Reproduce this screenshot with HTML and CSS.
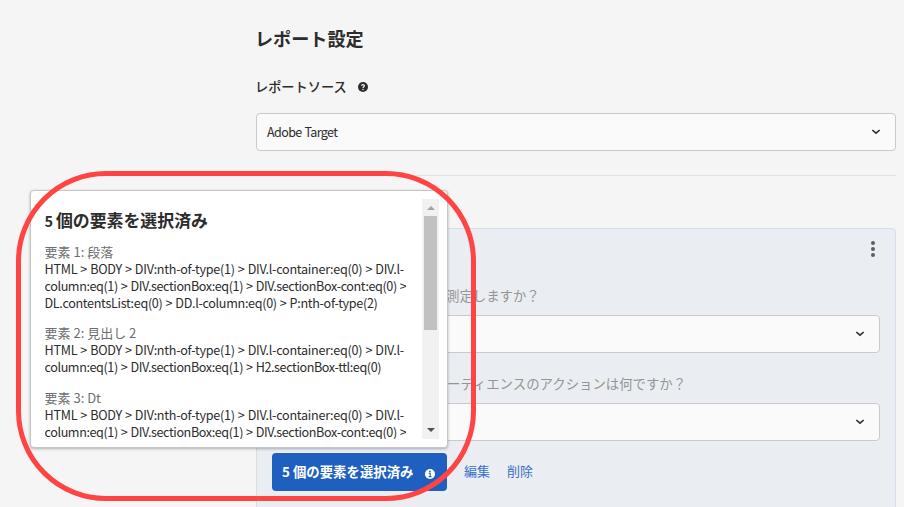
FILE: index.html
```html
<!DOCTYPE html>
<html lang="ja">
<head>
<meta charset="utf-8">
<title>レポート設定</title>
<link rel="stylesheet" href="styles.css">
</head>
<body>
<main class="settings">
  <h1 class="title">レポート設定</h1>
  <div class="label">
    <span>レポートソース</span>
    <svg class="help" viewBox="0 0 10 10" width="10" height="10"><circle cx="5" cy="5" r="5" fill="#2c2c2c"/><path d="M3.5 3.7C3.6 2.2 6.4 2.2 6.4 3.8C6.4 4.8 5 4.8 5 6" fill="none" stroke="#f5f5f5" stroke-width="1.2"/><circle cx="5" cy="7.6" r=".75" fill="#f5f5f5"/></svg>
  </div>
  <div class="select">
    <span class="value">Adobe Target</span>
    <svg class="chevron" viewBox="0 0 10 6" width="10" height="6"><path d="M1.3 1L5 4.2L8.7 1" fill="none" stroke="#2c2c2c" stroke-width="1.6"/></svg>
  </div>
  <hr class="divider">
  <section class="goal">
    <div class="goal-head">
      <svg viewBox="0 0 4 16" width="4" height="16" class="more"><circle cx="2" cy="2" r="2"/><circle cx="2" cy="8" r="2"/><circle cx="2" cy="14" r="2"/></svg>
    </div>
    <p class="question measure">測定しますか？</p>
    <div class="select">
      <svg class="chevron" viewBox="0 0 10 6" width="10" height="6"><path d="M1.3 1L5 4.2L8.7 1" fill="none" stroke="#2c2c2c" stroke-width="1.6"/></svg>
    </div>
    <p class="question action">ーディエンスのアクションは何ですか？</p>
    <div class="select">
      <svg class="chevron" viewBox="0 0 10 6" width="10" height="6"><path d="M1.3 1L5 4.2L8.7 1" fill="none" stroke="#2c2c2c" stroke-width="1.6"/></svg>
    </div>
    <div class="actions">
      <button class="selected"><span>5 個の要素を選択済み</span>
        <svg class="info" viewBox="0 0 10 10" width="10" height="10"><circle cx="5" cy="5" r="5" fill="#fff"/><circle cx="5" cy="2.4" r=".9" fill="#1e5fc0"/><path d="M3.7 4.3H5.2V7.5M3.6 7.6H6.5" fill="none" stroke="#1e5fc0" stroke-width="1.1"/></svg>
      </button>
      <a class="link">編集</a>
      <a class="link">削除</a>
    </div>
  </section>
</main>

<aside class="popover">
  <div class="content">
    <h2 class="popover-title"><span class="count">5</span> 個の要素を選択済み</h2>
    <div class="element">
      <div class="name">要素 1: 段落</div>
      <div class="path">HTML &gt; BODY &gt; DIV:nth-of-type(1) &gt; DIV.l-container:eq(0) &gt; DIV.l-</div>
      <div class="path tight">column:eq(1) &gt; DIV.sectionBox:eq(1) &gt; DIV.sectionBox-cont:eq(0) &gt;</div>
      <div class="path snug">DL.contentsList:eq(0) &gt; DD.l-column:eq(0) &gt; P:nth-of-type(2)</div>
    </div>
    <div class="element">
      <div class="name">要素 2: 見出し 2</div>
      <div class="path">HTML &gt; BODY &gt; DIV:nth-of-type(1) &gt; DIV.l-container:eq(0) &gt; DIV.l-</div>
      <div class="path tight">column:eq(1) &gt; DIV.sectionBox:eq(1) &gt; H2.sectionBox-ttl:eq(0)</div>
    </div>
    <div class="element">
      <div class="name">要素 3: Dt</div>
      <div class="path">HTML &gt; BODY &gt; DIV:nth-of-type(1) &gt; DIV.l-container:eq(0) &gt; DIV.l-</div>
      <div class="path tight">column:eq(1) &gt; DIV.sectionBox:eq(1) &gt; DIV.sectionBox-cont:eq(0) &gt;</div>
    </div>
  </div>
  <div class="scrollbar">
    <span class="arrow up"></span>
    <span class="thumb"></span>
    <span class="arrow down"></span>
  </div>
</aside>
<div class="highlight"></div>
</body>
</html>
```
FILE: styles.css
```css
* { box-sizing: border-box; }
body {
  margin: 0;
  height: 507px;
  overflow: hidden;
  position: relative;
  background: #f5f5f5;
  color: #2c2c2c;
  font: 13px/17px "Noto Sans CJK JP", sans-serif;
}
.settings { width: 640px; margin-left: 256px; padding-top: 25px; }
.title { margin: 0 0 0 -1px; font-size: 18.1px; line-height: 26px; font-weight: 700; }
.label { display: flex; align-items: center; gap: 11.5px; height: 20px; margin-top: 26px; font-size: 13.2px; font-weight: 500; }
.label span { margin: -2px 0 0 -1px; }
.select {
  display: flex;
  align-items: center;
  height: 38px;
  padding: 0 14px 0 10px;
  border: 1px solid #cacaca;
  border-radius: 4px;
  background: #fafafa;
}
.settings > .select { margin-top: 16px; }
.value { font-size: 12.5px; letter-spacing: -.6px; word-spacing: .6px; margin-top: -2px; }
.chevron { margin-left: auto; }
.divider { margin: 24px 0 0; border: 0; height: 1px; background: #e1e1e1; }
.goal {
  height: 300px;
  margin-top: 52px;
  padding: 0 15px;
  border: 1px solid #d3deee;
  border-radius: 4px;
  background: #eaeef3;
}
.goal-head { display: flex; justify-content: flex-end; height: 57px; padding: 12px 5px 0; }
.more { fill: #5b6068; }
.question { margin: 0; height: 29px; line-height: 18px; color: #959595; white-space: nowrap; font-size: 13.4px; }
.measure { padding-left: 174px; }
.action { margin-top: 21px; padding-left: 175px; }
.actions { display: flex; align-items: center; margin-top: 12px; }
.selected {
  display: flex;
  align-items: center;
  justify-content: space-between;
  width: 175px;
  height: 38px;
  padding: 0 12px 0 10px;
  border: 0;
  border-radius: 4px;
  background: #1e5fc0;
  color: #fff;
  font: 700 13.4px/18px "Noto Sans CJK JP", sans-serif;
}
.selected span { margin-top: -2px; }
.info { margin-top: 4px; }
.link { margin: -4px 0 0 17px; color: #3a70c8; }

.popover {
  position: absolute;
  left: 30px;
  top: 190px;
  display: flex;
  justify-content: space-between;
  width: 418px;
  height: 258px;
  padding: 8px 8px 8px 13.5px;
  border: 1px solid #c6c6c6;
  border-radius: 4px;
  background: #fff;
  box-shadow: 0 1px 3px rgba(0, 0, 0, .28);
}
.content { overflow: hidden; white-space: nowrap; padding-top: 9px; }
.popover-title { margin: 0 0 10px; font-size: 16.9px; line-height: 24px; font-weight: 700; }
.count { font-size: 14.5px; margin-right: -1px; }
.element { margin-bottom: 13.3px; }
.name { color: #6e6e6e; }
.path { font-size: 12.6px; letter-spacing: -.27px; word-spacing: .6px; }
.tight { letter-spacing: -.4px; }
.snug { letter-spacing: -.32px; }
.scrollbar { display: flex; flex: none; flex-direction: column; align-items: center; width: 17px; height: 240px; background: #f1f1f1; }
.thumb { width: 13px; height: 114px; background: #c1c1c1; }
.arrow { width: 0; height: 0; border: 4px solid transparent; border-top: 0; }
.up { margin: 7px 0 6px; border-bottom-color: #a3a3a3; }
.down { margin: auto 0 7px; border-bottom: 0; border-top: 4px solid #505050; }
.highlight {
  position: absolute;
  left: 16px;
  top: 171px;
  width: 460px;
  height: 330px;
  border: 5px solid #ff4444;
  border-radius: 90px;
}
```
